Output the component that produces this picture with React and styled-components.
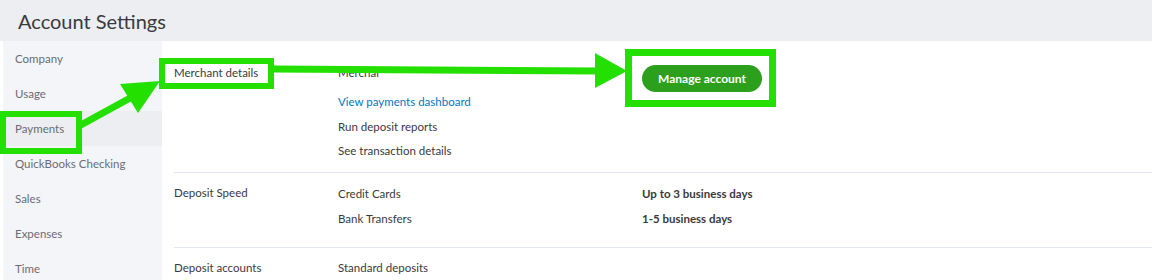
import React from "react";
import styled, { createGlobalStyle } from "styled-components";

const Global = createGlobalStyle`
  html, body { margin: 0; padding: 0; background: #ffffff; }
  body { font-family: Lato, "Noto Sans", sans-serif; color: #393a3d; }
  * { box-sizing: border-box; }
`;

const Page = styled.div`
  position: relative;
  width: 1152px;
  height: 280px;
  overflow: hidden;
  background: #ffffff;
`;

const Header = styled.header`
  height: 41px;
  background: #eceef1;
  padding-left: 18px;
  display: flex;
  align-items: center;
  font-size: 20px;
  color: #393a3d;
`;

const Body = styled.div`
  display: flex;
  padding-left: 3px;
`;

const Sidebar = styled.nav`
  width: 159px;
  flex: none;
  background: #f4f5f8;
  display: flex;
  flex-direction: column;
`;

const NavItem = styled.div`
  height: 35px;
  display: flex;
  align-items: center;
  padding-left: 12px;
  font-size: 11.5px;
  color: #6b6c72;
  background: ${(p) => (p.$active ? "#eceef1" : "transparent")};
  white-space: nowrap;
`;

const Content = styled.main`
  flex: 1;
  margin-left: 12px;
  display: flex;
  flex-direction: column;
`;

const Section = styled.section`
  display: grid;
  grid-template-columns: 164px 304px 1fr;
  padding-top: ${(p) => p.$pt}px;
  padding-bottom: ${(p) => p.$pb}px;
  border-bottom: ${(p) => (p.$divider ? "1px solid #e1e6ec" : "none")};
  font-size: 11.5px;
`;

const Label = styled.div`
  line-height: 24px;
  color: #393a3d;
`;

const Col = styled.div`
  display: flex;
  flex-direction: column;
`;

const Line = styled.div`
  line-height: ${(p) => p.$lh || 24}px;
  margin-bottom: ${(p) => p.$mb || 0}px;
  color: ${(p) => (p.$link ? "#0077c5" : "#393a3d")};
  font-weight: ${(p) => (p.$bold ? 700 : 400)};
  white-space: nowrap;
`;

const Button = styled.button`
  margin-top: 4px;
  width: 120px;
  height: 27px;
  border: none;
  border-radius: 14px;
  background: #2ca01c;
  color: #ffffff;
  font-family: Lato, "Noto Sans", sans-serif;
  font-size: 12px;
  font-weight: 700;
  padding: 0;
`;

const Overlay = styled.svg`
  position: absolute;
  top: 0;
  left: 0;
  pointer-events: none;
`;

const G = "#24e000";

export default function App() {
  return (
    <Page>
      <Global />
      <Header>Account Settings</Header>
      <Body>
        <Sidebar>
          <NavItem>Company</NavItem>
          <NavItem>Usage</NavItem>
          <NavItem $active>Payments</NavItem>
          <NavItem>QuickBooks Checking</NavItem>
          <NavItem>Sales</NavItem>
          <NavItem>Expenses</NavItem>
          <NavItem>Time</NavItem>
        </Sidebar>
        <Content>
          <Section $pt={20} $pb={9} $divider>
            <Label>Merchant details</Label>
            <Col>
              <Line $mb={5}>Merchar</Line>
              <Line $link>View payments dashboard</Line>
              <Line $lh={25}>Run deposit reports</Line>
              <Line>See transaction details</Line>
            </Col>
            <Col>
              <div>
                <Button>Manage account</Button>
              </div>
            </Col>
          </Section>
          <Section $pt={8} $pb={16} $divider>
            <Label>Deposit Speed</Label>
            <Col>
              <Line $lh={25}>Credit Cards</Line>
              <Line $lh={25}>Bank Transfers</Line>
            </Col>
            <Col>
              <Line $lh={25} $bold>Up to 3 business days</Line>
              <Line $lh={25} $bold>1-5 business days</Line>
            </Col>
          </Section>
          <Section $pt={8} $pb={0}>
            <Label>Deposit accounts</Label>
            <Col>
              <Line>Standard deposits</Line>
            </Col>
            <Col />
          </Section>
        </Content>
      </Body>
      <Overlay width="1152" height="280" viewBox="0 0 1152 280">
        <rect x="3" y="114" width="76" height="37" fill="none" stroke={G} strokeWidth="6" />
        <rect x="162" y="61" width="109" height="25" fill="none" stroke={G} strokeWidth="6" />
        <rect x="628.5" y="52.5" width="144" height="51" fill="none" stroke={G} strokeWidth="7" />
        <line x1="79" y1="126" x2="132" y2="97" stroke={G} strokeWidth="7" />
        <polygon points="160,81 120,84 138,113" fill={G} />
        <line x1="273" y1="69" x2="600" y2="71" stroke={G} strokeWidth="7" />
        <polygon points="595,53 627,71 595,88" fill={G} />
      </Overlay>
    </Page>
  );
}
